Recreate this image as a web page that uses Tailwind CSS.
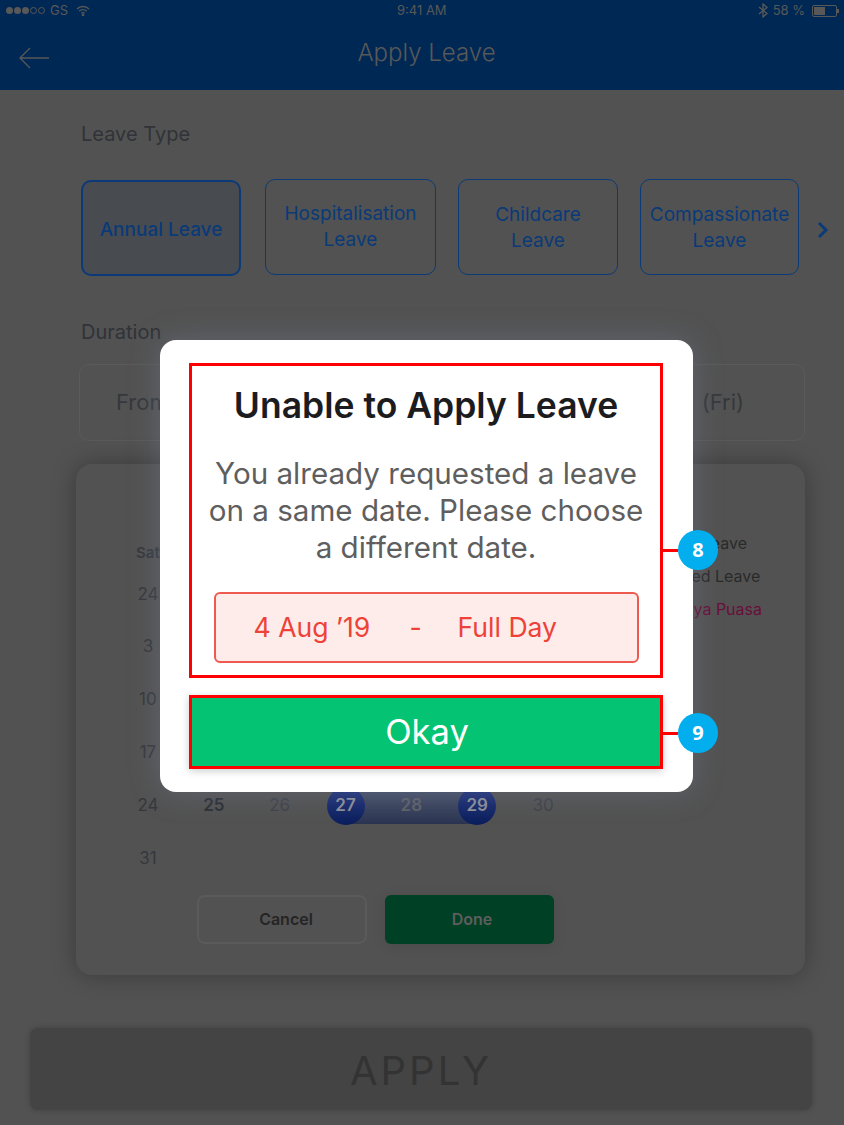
<!doctype html>
<html lang="en">
<head>
<meta charset="UTF-8" />
<meta name="viewport" content="width=device-width, initial-scale=1.0" />
<title>Apply Leave</title>
<script src="https://cdn.jsdelivr.net/npm/@tailwindcss/browser@4"></script>
</head>
<body class="bg-[#525252] font-['Inter','Liberation_Sans',sans-serif]">
<div class="relative w-[844px] h-[1125px] overflow-hidden">
    <!-- Header -->
    <header class="bg-[#002855] h-[90px] text-[#585858]">
        <div class="relative flex items-center justify-between h-[21px] pl-[6px] pr-[5px] text-[13px]">
            <div class="flex items-center gap-[5px]">
                <div class="flex gap-[1px]">
                    <span class="w-[7px] h-[7px] rounded-full bg-[#585858]"></span>
                    <span class="w-[7px] h-[7px] rounded-full bg-[#585858]"></span>
                    <span class="w-[7px] h-[7px] rounded-full bg-[#585858]"></span>
                    <span class="w-[7px] h-[7px] rounded-full border border-[#585858]"></span>
                    <span class="w-[7px] h-[7px] rounded-full border border-[#585858]"></span>
                </div>
                <span>GS</span>
                <svg class="ml-[3px]" width="14" height="11" viewBox="0 0 14 11" fill="none" stroke="#585858" stroke-width="1.4">
                    <path d="M1 4a8.5 8.5 0 0 1 12 0" />
                    <path d="M3.2 6.2a5.4 5.4 0 0 1 7.6 0" />
                    <path d="M5.3 8.3a2.4 2.4 0 0 1 3.4 0" />
                    <circle cx="7" cy="10" r="0.6" fill="#585858" />
                </svg>
            </div>
            <span class="absolute left-[397px]">9:41 AM</span>
            <div class="flex items-center gap-[5px]">
                <svg width="10" height="15" viewBox="0 0 10 15" fill="none" stroke="#585858" stroke-width="1.3">
                    <path d="M1 4l8 6.5-4 3.5V1l4 3.5L1 11" />
                </svg>
                <span>58 %</span>
                <div class="flex items-center ml-[2px]">
                    <div class="w-[25px] h-[12px] border border-[#585858] rounded-[2px] p-[1px]">
                        <div class="w-[11px] h-full bg-[#585858]"></div>
                    </div>
                    <div class="w-[2px] h-[4px] bg-[#585858]"></div>
                </div>
            </div>
        </div>
        <div class="relative flex items-center justify-center h-[63px] text-[24px] font-light">
            <svg class="absolute left-[19px] top-[26px]" width="31" height="22" viewBox="0 0 31 22" fill="none" stroke="#585858" stroke-width="1.3">
                <path d="M30 11H1M11 1L1 11l10 10" />
            </svg>
            <span class="ml-[9px]">Apply Leave</span>
        </div>
    </header>

    <main class="relative">
        <section class="pl-[81px] pt-[32px]">
            <h2 class="text-[20px] leading-[24px] text-[#303338]">Leave Type</h2>
            <div class="flex items-start mt-[33px] text-[19px] leading-[26px] text-center text-[#0a3a78]">
                <button class="w-[160px] h-[96px] mt-[1px] pt-[4px] rounded-[10px] border-2 border-[#0a3a78] bg-[#484b50] font-medium">Annual Leave</button>
                <button class="w-[171px] h-[96px] ml-[24px] rounded-[10px] border border-[#0a3a78]">Hospitalisation<br />Leave</button>
                <button class="w-[160px] h-[96px] ml-[22px] pt-[2px] rounded-[10px] border border-[#0a3a78]">Childcare<br />Leave</button>
                <button class="w-[159px] h-[96px] ml-[22px] pt-[2px] rounded-[10px] border border-[#0a3a78]">Compassionate<br />Leave</button>
                <svg class="ml-[18px] mt-[42px]" width="12" height="18" viewBox="0 0 12 18" fill="none" stroke="#0a3a78" stroke-width="3">
                    <path d="M2 2l7 7-7 7" />
                </svg>
            </div>
            <h2 class="mt-[44px] text-[20px] leading-[24px] text-[#303338]">Duration</h2>
        </section>

        <section class="ml-[79px] w-[726px] h-[77px] mt-[20px] rounded-[10px] border border-[#5a5a5a] flex items-center justify-between pl-[36px] pr-[60px] text-[22px] text-[#35383c]">
            <span>From</span>
            <span>(Fri)</span>
        </section>

        <!-- Calendar -->
        <section class="ml-[76px] w-[729px] h-[511px] mt-[23px] rounded-[16px] bg-[#525252] shadow-[0_0_24px_rgba(0,0,0,0.3)] pt-[78px]">
            <div class="flex">
                <div class="ml-[39px] w-[461px] text-[17px] text-[#35383e]">
                    <div class="grid grid-cols-7 text-center font-semibold text-[15px] leading-[22px]"><span>Sat</span></div>
                    <div class="grid grid-cols-7 mt-[4px] auto-rows-[52.8px] items-center text-center">
                        <span class="col-start-1">24</span>
                        <span class="col-start-1">3</span>
                        <span class="col-start-1">10</span>
                        <span class="col-start-1">17</span>
                        <span class="col-start-1">24</span>
                        <span class="font-semibold text-[#2c2f35]">25</span>
                        <span class="text-[#3f424a]">26</span>
                        <span class="relative h-[38px] flex items-center justify-center font-semibold text-[#8c8e98]">
                            <span class="absolute left-[33px] right-[-20px] h-[36px] bg-gradient-to-b from-[#4a5268] to-[#2b3552]"></span>
                            <span class="absolute left-[14px] w-[38px] h-[38px] rounded-full bg-gradient-to-b from-[#22347c] to-[#0b1e5c]"></span>
                            <span class="relative">27</span>
                        </span>
                        <span class="relative h-[36px] flex items-center justify-center font-semibold text-[#5e6068] bg-gradient-to-b from-[#4a5268] to-[#2b3552]">28</span>
                        <span class="relative h-[38px] flex items-center justify-center font-semibold text-[#8c8e98]">
                            <span class="absolute left-[-20px] right-[33px] h-[36px] bg-gradient-to-b from-[#4a5268] to-[#2b3552]"></span>
                            <span class="absolute right-[14px] w-[38px] h-[38px] rounded-full bg-gradient-to-b from-[#22347c] to-[#0b1e5c]"></span>
                            <span class="relative">29</span>
                        </span>
                        <span class="text-[#3f424a]">30</span>
                        <span class="col-start-1">31</span>
                    </div>
                </div>
                <ul class="ml-[77px] mt-[-15px] text-[16px] leading-[33px] text-[#2a2a2a]">
                    <li class="-ml-[8px]">Annual Leave</li>
                    <li>Applied Leave</li>
                    <li class="-ml-[14px] text-[#6a0e3a]">Hari Raya Puasa</li>
                </ul>
            </div>
            <div class="flex gap-[18px] ml-[121px] mt-[10px] text-[16px] font-semibold text-center">
                <button class="w-[170px] h-[49px] pl-[8px] rounded-[8px] border-2 border-[#5a5a5a] text-[#252525]">Cancel</button>
                <button class="w-[169px] h-[49px] pl-[5px] rounded-[6px] bg-[#004024] text-[#5e5e5e] shadow-[0_2px_14px_rgba(0,0,0,0.1)]">Done</button>
            </div>
        </section>

        <div class="ml-[30px] w-[782px] h-[82px] mt-[53px] pt-[3px] rounded-[8px] bg-[#444444] shadow-[0_0_6px_rgba(0,0,0,0.2)] flex items-center justify-center text-[40px] tracking-[3px] text-[#333333]">APPLY</div>
    </main>

    <!-- Modal -->
    <div class="absolute left-[160px] top-[340px] w-[533px] h-[452px] rounded-[16px] bg-white shadow-[0_0_30px_rgba(130,140,170,0.35)] pl-[29px] pt-[23px]">
        <div class="relative w-[474px] h-[315px] border-[3px] border-[#ff0000] flex flex-col items-center">
            <h1 class="mt-[20px] text-[35.5px] leading-[40px] font-semibold whitespace-nowrap text-[#1c1c1e]">Unable to Apply Leave</h1>
            <p class="mt-[29px] w-[450px] text-center text-[29.6px] leading-[37px] text-[#5e5e5e]">You already requested a leave on a same date. Please choose a different date.</p>
            <div class="mt-[26px] w-[425px] h-[71px] rounded-[6px] border-2 border-[#ef5a50] bg-[#fdecea] flex items-center pl-[38px] text-[26.6px] text-[#ee4238]">
                <span class="w-[156px]">4 Aug ’19</span>
                <span class="w-[48px]">-</span>
                <span>Full Day</span>
            </div>
        </div>
        <div class="relative mt-[17px] w-[474px] h-[74px] border-[3px] border-[#ff0000] bg-[#04c473] shadow-[0_2px_8px_rgba(0,0,0,0.2)] flex items-center justify-center pl-[2px] text-[34.5px] text-white">Okay</div>
    </div>

    <!-- Callouts -->
    <div class="absolute left-[663px] top-[549px] flex items-center -translate-y-1/2 mt-[1px]">
        <span class="w-[15px] h-[3px] bg-[#ff0000]"></span>
        <span class="w-[40px] h-[40px] rounded-full bg-[#03aeef] flex items-center justify-center text-[20px] font-bold text-white font-['Open_Sans',sans-serif]">8</span>
    </div>
    <div class="absolute left-[663px] top-[732px] flex items-center -translate-y-1/2 mt-[1px]">
        <span class="w-[15px] h-[3px] bg-[#ff0000]"></span>
        <span class="w-[40px] h-[40px] rounded-full bg-[#03aeef] flex items-center justify-center text-[20px] font-bold text-white font-['Open_Sans',sans-serif]">9</span>
    </div>
</div>
</body>
</html>
